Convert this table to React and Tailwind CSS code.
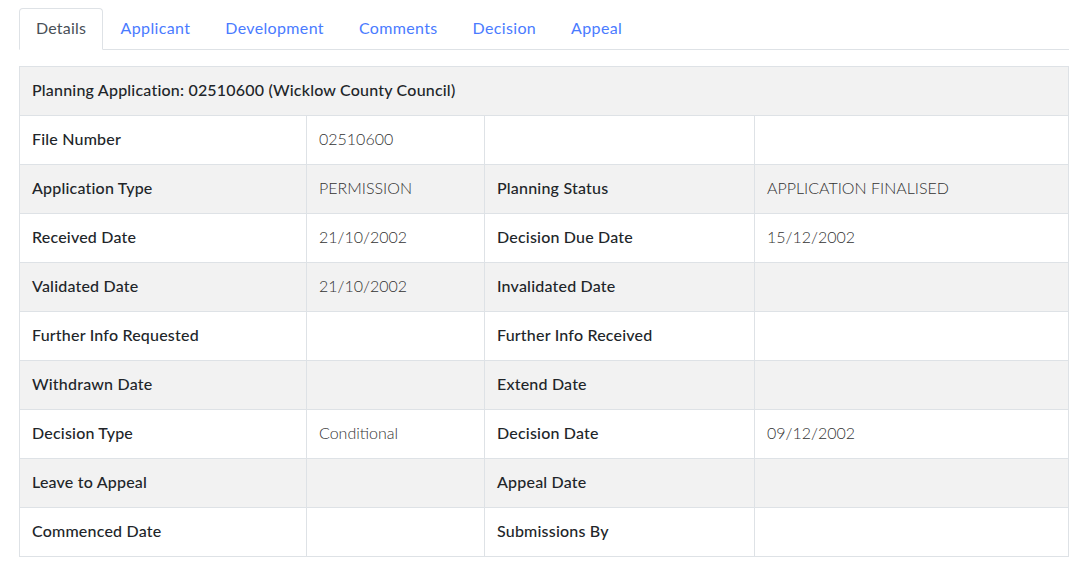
const TABS = ['Details', 'Applicant', 'Development', 'Comments', 'Decision', 'Appeal'];

const ROWS = [
  ['File Number', '02510600', '', ''],
  ['Application Type', 'PERMISSION', 'Planning Status', 'APPLICATION FINALISED'],
  ['Received Date', '21/10/2002', 'Decision Due Date', '15/12/2002'],
  ['Validated Date', '21/10/2002', 'Invalidated Date', ''],
  ['Further Info Requested', '', 'Further Info Received', ''],
  ['Withdrawn Date', '', 'Extend Date', ''],
  ['Decision Type', 'Conditional', 'Decision Date', '09/12/2002'],
  ['Leave to Appeal', '', 'Appeal Date', ''],
  ['Commenced Date', '', 'Submissions By', ''],
];

const cell = 'border border-[#dee2e6] px-3 pt-[11px] pb-[13px]';

export default function App() {
  return (
    <div className="bg-white px-[19px] pt-2 font-['Lato','Open_Sans',sans-serif] text-[16px] leading-6 text-[#212529]">
      <ul className="flex border-b border-[#dee2e6]">
        {TABS.map((t, i) => (
          <li key={t} className="-mb-px">
            <a
              className={
                i === 0
                  ? 'block rounded-t border border-[#dee2e6] border-b-white bg-white px-4 pt-[7px] pb-[9px] tracking-[0.2px] text-[#495057]'
                  : 'block border border-transparent px-[16.5px] pt-[7px] pb-[9px] tracking-[0.35px] text-[#4a7bff]'
              }
            >
              {t}
            </a>
          </li>
        ))}
      </ul>

      <table className="mt-4 w-full table-fixed border-collapse border border-[#dee2e6]">
        <colgroup>
          <col className="w-[287px]" />
          <col className="w-[178px]" />
          <col className="w-[270px]" />
          <col />
        </colgroup>
        <tbody>
          <tr className="bg-[#f2f2f2]">
            <td colSpan={4} className={`${cell} font-medium tracking-[0.2px]`}>
              Planning Application: 02510600 (Wicklow County Council)
            </td>
          </tr>
          {ROWS.map((r, i) => (
            <tr key={r[0]} className={i % 2 === 1 ? 'bg-[#f2f2f2]' : 'bg-white'}>
              <td className={`${cell} font-medium tracking-[0.2px]`}>{r[0]}</td>
              <td className={`${cell} font-light text-[#333]`}>{r[1]}</td>
              <td className={`${cell} font-medium tracking-[0.2px]`}>{r[2]}</td>
              <td className={`${cell} font-light text-[#333]`}>{r[3]}</td>
            </tr>
          ))}
        </tbody>
      </table>
    </div>
  );
}
